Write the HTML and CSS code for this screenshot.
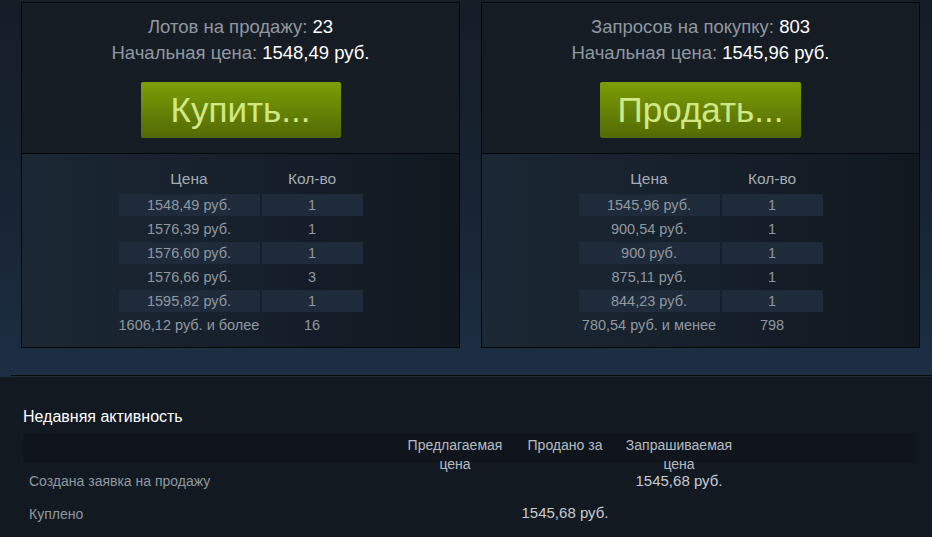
FILE: index.html
```html
<!DOCTYPE html>
<html lang="ru">
<head>
<meta charset="utf-8">
<title>Торговая площадка</title>
<link rel="stylesheet" href="styles.css">
</head>
<body>
<div class="market">
  <div class="orders">
    <section class="panel">
      <div class="panel-top">
        <div class="stat"><span class="label">Лотов на продажу:</span> <span class="value">23</span></div>
        <div class="stat"><span class="label">Начальная цена:</span> <span class="value">1548,49 руб.</span></div>
        <a class="btn-green">Купить...</a>
      </div>
      <div class="panel-bottom">
        <table class="book">
          <thead><tr><th class="c-price">Цена</th><th class="c-qty">Кол-во</th></tr></thead>
          <tbody>
            <tr class="odd"><td>1548,49 руб.</td><td>1</td></tr>
            <tr><td>1576,39 руб.</td><td>1</td></tr>
            <tr class="odd"><td>1576,60 руб.</td><td>1</td></tr>
            <tr><td>1576,66 руб.</td><td>3</td></tr>
            <tr class="odd"><td>1595,82 руб.</td><td>1</td></tr>
            <tr><td>1606,12 руб. и более</td><td>16</td></tr>
          </tbody>
        </table>
      </div>
    </section>
    <section class="panel">
      <div class="panel-top">
        <div class="stat"><span class="label">Запросов на покупку:</span> <span class="value">803</span></div>
        <div class="stat"><span class="label">Начальная цена:</span> <span class="value">1545,96 руб.</span></div>
        <a class="btn-green">Продать...</a>
      </div>
      <div class="panel-bottom">
        <table class="book">
          <thead><tr><th class="c-price">Цена</th><th class="c-qty">Кол-во</th></tr></thead>
          <tbody>
            <tr class="odd"><td>1545,96 руб.</td><td>1</td></tr>
            <tr><td>900,54 руб.</td><td>1</td></tr>
            <tr class="odd"><td>900 руб.</td><td>1</td></tr>
            <tr><td>875,11 руб.</td><td>1</td></tr>
            <tr class="odd"><td>844,23 руб.</td><td>1</td></tr>
            <tr><td>780,54 руб. и менее</td><td>798</td></tr>
          </tbody>
        </table>
      </div>
    </section>
  </div>
  <div class="sep"></div>
</div>
<div class="activity">
  <h2 class="act-title">Недавняя активность</h2>
  <div class="act-head">
    <div></div>
    <div class="act-col">Предлагаемая цена</div>
    <div class="act-col">Продано за</div>
    <div class="act-col">Запрашиваемая цена</div>
  </div>
  <div class="act-row">
    <div class="act-name">Создана заявка на продажу</div>
    <div></div>
    <div></div>
    <div class="act-val">1545,68 руб.</div>
  </div>
  <div class="act-row">
    <div class="act-name">Куплено</div>
    <div></div>
    <div class="act-val act-val-up">1545,68 руб.</div>
    <div></div>
  </div>
</div>
</body>
</html>
```
FILE: styles.css
```css
html, body {
  margin: 0;
  padding: 0;
}
body {
  background: #131920;
  font-family: "Liberation Sans", Arial, sans-serif;
  color: #8f98a0;
  width: 932px;
  height: 537px;
  overflow: hidden;
}
.market {
  background: linear-gradient(to bottom, #151d27 0%, #182433 55%, #1c2f44 100%);
  padding-top: 2px;
}
.orders {
  display: flex;
  gap: 21px;
  padding-left: 21px;
}
.panel {
  width: 439px;
  box-sizing: border-box;
  border: 1px solid #06090c;
  display: flex;
  flex-direction: column;
}
.panel-top {
  background: #161c24;
  height: 151px;
  box-sizing: border-box;
  padding-top: 11px;
  text-align: center;
  border-bottom: 1px solid #06090c;
}
.stat {
  font-size: 18.5px;
  line-height: 26px;
}
.label {
  color: #8f98a0;
}
.value {
  color: #ffffff;
}
.btn-green {
  display: inline-block;
  margin-top: 16px;
  min-width: 200px;
  height: 56px;
  box-sizing: border-box;
  padding: 0 18px;
  border-radius: 2px;
  background: linear-gradient(to bottom, #7a9c06 5%, #546b05 95%);
  color: #d2e885;
  font-size: 35px;
  line-height: 56px;
  cursor: pointer;
}
.panel-bottom {
  background: linear-gradient(to right, #1b2734 0%, #16202b 50%, #111820 100%);
  padding: 12px 0 9px;
}
.book {
  margin: 0 auto;
  border-spacing: 2px;
  border-collapse: separate;
}
.book th {
  font-weight: normal;
  font-size: 15.5px;
  color: #a4acb3;
  height: 24px;
  padding: 0;
  vertical-align: top;
  line-height: 22px;
}
.book td {
  height: 22px;
  padding: 0;
  font-size: 14.5px;
  color: #8f98a0;
  text-align: center;
  white-space: nowrap;
}
.c-price {
  width: 141px;
}
.c-qty {
  width: 101px;
}
.book tr.odd td {
  background: #1f2b3a;
}
.sep {
  margin-top: 27px;
  margin-left: 11px;
  height: 1px;
  border-top: 1px solid #05080b;
  background: #222c37;
}
.activity {
  padding: 0 16px 0 23px;
}
.act-title {
  margin: 0;
  padding-top: 30px;
  font-size: 16px;
  font-weight: normal;
  color: #ffffff;
  line-height: 20px;
}
.act-head,
.act-row {
  display: grid;
  grid-template-columns: 382px 100px 120px 108px 1fr;
}
.act-head {
  margin-top: 6px;
  height: 30px;
  background: #10151b;
  font-size: 14px;
  line-height: 19px;
  color: #b4bcc3;
  padding-top: 3px;
  box-sizing: border-box;
}
.act-col {
  text-align: center;
}
.act-row {
  height: 33px;
  font-size: 14px;
  line-height: 20px;
}
.act-name {
  padding: 8px 0 0 6px;
  color: #8f98a0;
}
.act-val {
  padding-top: 11px;
  font-size: 15px;
  line-height: 14px;
  text-align: center;
  color: #c6ccd2;
  white-space: nowrap;
}
.act-val-up {
  padding-top: 10px;
}
```
